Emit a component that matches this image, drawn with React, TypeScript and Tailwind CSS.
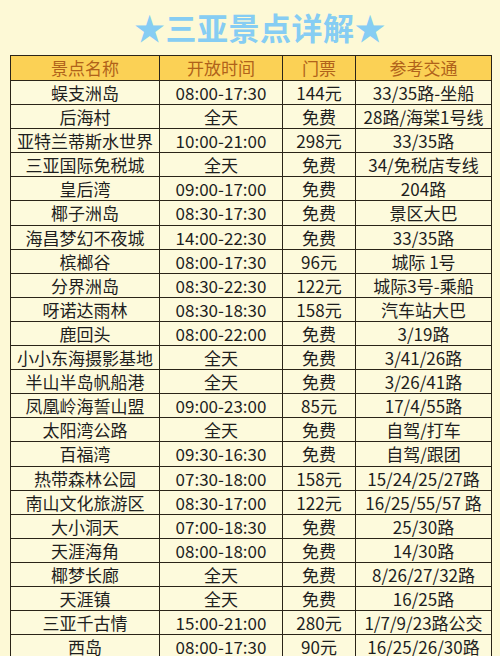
const rows = [
  ["蜈支洲岛", "08:00-17:30", "144元", "33/35路-坐船"],
  ["后海村", "全天", "免费", "28路/海棠1号线"],
  ["亚特兰蒂斯水世界", "10:00-21:00", "298元", "33/35路"],
  ["三亚国际免税城", "全天", "免费", "34/免税店专线"],
  ["皇后湾", "09:00-17:00", "免费", "204路"],
  ["椰子洲岛", "08:30-17:30", "免费", "景区大巴"],
  ["海昌梦幻不夜城", "14:00-22:30", "免费", "33/35路"],
  ["槟榔谷", "08:00-17:30", "96元", "城际 1号"],
  ["分界洲岛", "08:30-22:30", "122元", "城际3号-乘船"],
  ["呀诺达雨林", "08:30-18:30", "158元", "汽车站大巴"],
  ["鹿回头", "08:00-22:00", "免费", "3/19路"],
  ["小小东海摄影基地", "全天", "免费", "3/41/26路"],
  ["半山半岛帆船港", "全天", "免费", "3/26/41路"],
  ["凤凰岭海誓山盟", "09:00-23:00", "85元", "17/4/55路"],
  ["太阳湾公路", "全天", "免费", "自驾/打车"],
  ["百福湾", "09:30-16:30", "免费", "自驾/跟团"],
  ["热带森林公园", "07:30-18:00", "158元", "15/24/25/27路"],
  ["南山文化旅游区", "08:30-17:00", "122元", "16/25/55/57 路"],
  ["大小洞天", "07:00-18:30", "免费", "25/30路"],
  ["天涯海角", "08:00-18:00", "免费", "14/30路"],
  ["椰梦长廊", "全天", "免费", "8/26/27/32路"],
  ["天涯镇", "全天", "免费", "16/25路"],
  ["三亚千古情", "15:00-21:00", "280元", "1/7/9/23路公交"],
  ["西岛", "08:00-17:30", "90元", "16/25/26/30路"],
];

const App = () => {
  return (
    <div
      className="w-[500px] h-[656px] overflow-hidden bg-[#fdf9d6]"
      style={{ fontFamily: '"Noto Sans CJK SC", "Noto Sans", sans-serif' }}
    >
      {/* TITLE */}
      <div className="h-[56px] flex items-center justify-center pl-[20px] pb-[4px]">
        <h1 className="text-[31px] font-bold text-[#86cdf3] tracking-[0.5px] leading-none">
          ★三亚景点详解★
        </h1>
      </div>

      {/* TABLE */}
      <div className="ml-[10px] -mt-[1px] w-[482px] border-[1.5px] border-[#2a2418]">
        <div className="grid grid-cols-[149px_123px_73px_1fr] h-[25px] bg-[#fbd155] text-[#b0621a] text-[17px] leading-[24px] border-b-[1.5px] border-[#2a2418]">
          <div className="text-center border-r border-[#2a2418]">景点名称</div>
          <div className="text-center border-r border-[#2a2418]">开放时间</div>
          <div className="text-center border-r border-[#2a2418]">门票</div>
          <div className="text-center">参考交通</div>
        </div>

        {rows.map((r, i) => (
          <div
            key={i}
            className="grid grid-cols-[149px_123px_73px_1fr] h-[24.1px] bg-[#fdfadc] text-[#1e1e1e] text-[17px] leading-[23px] border-b border-[#2a2418]"
          >
            <div className="text-center border-r border-[#2a2418] whitespace-nowrap">{r[0]}</div>
            <div className="text-center border-r border-[#2a2418]">{r[1]}</div>
            <div className="text-center border-r border-[#2a2418]">{r[2]}</div>
            <div className="text-center whitespace-nowrap">{r[3]}</div>
          </div>
        ))}
      </div>
    </div>
  );
};

export default App;
